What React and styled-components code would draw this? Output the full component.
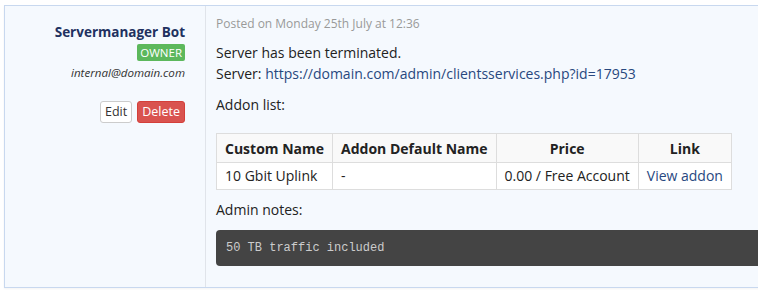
import React from 'react';
import styled, { createGlobalStyle } from 'styled-components';

const GlobalStyle = createGlobalStyle`
  html, body {
    margin: 0;
    padding: 0;
    background: #ffffff;
    overflow: hidden;
  }
  body {
    font-family: "Open Sans", "Noto Sans", sans-serif;
    font-size: 14px;
    color: #222;
  }
`;

const Page = styled.div`
  padding: 5px 0 0 4px;
  width: 758px;
  height: 292px;
  box-sizing: border-box;
  overflow: hidden;
`;

const Reply = styled.div`
  display: flex;
  width: 800px;
  height: 283px;
  box-sizing: border-box;
  background: #f5f9fe;
  border: 1px solid #c8d8ef;
  box-shadow: 0 1px 2px rgba(0, 0, 0, 0.05);
`;

const Sidebar = styled.div`
  width: 201px;
  flex-shrink: 0;
  box-sizing: border-box;
  border-right: 1px solid #e0e4ea;
  padding: 16px 20px 0 0;
  display: flex;
  flex-direction: column;
  align-items: flex-end;
  text-align: right;
`;

const Name = styled.div`
  font-weight: 700;
  font-size: 13.5px;
  line-height: 20px;
  color: #213160;
`;

const Badge = styled.span`
  margin-top: 2px;
  background: #5cb85c;
  color: #fff;
  font-size: 11.5px;
  line-height: 17px;
  padding: 0 3px;
  border-radius: 2px;
`;

const Email = styled.div`
  margin-top: 3px;
  font-size: 11.6px;
  line-height: 18px;
  font-style: italic;
  color: #333;
`;

const Actions = styled.div`
  display: flex;
  gap: 5px;
  margin-top: 19px;
`;

const Button = styled.button`
  font-family: "Open Sans", "Noto Sans", sans-serif;
  font-size: 12.5px;
  line-height: 20px;
  padding: 0 4px;
  border-radius: 3px;
  cursor: pointer;
  border: 1px solid ${p => (p.danger ? '#d43f3a' : '#ccc')};
  background: ${p => (p.danger ? '#d9534f' : '#fff')};
  color: ${p => (p.danger ? '#fff' : '#333')};
`;

const Message = styled.div`
  flex: 1;
  padding: 10px 0 0 10px;
`;

const Posted = styled.div`
  font-size: 12px;
  line-height: 16px;
  color: #999;
  margin-bottom: 10px;
`;

const Para = styled.p`
  margin: 0 0 10px;
  line-height: 21px;
`;

const Link = styled.a`
  color: #28487f;
  text-decoration: none;
`;

const Table = styled.table`
  border-collapse: collapse;
  margin: 18px 0 9px;
  background: #fff;

  th, td {
    border: 1px solid #ddd;
    padding: 3px 8px 4px;
    line-height: 19px;
    font-size: 14px;
    text-align: left;
    white-space: nowrap;
  }
  th {
    font-weight: 700;
    text-align: center;
    background: #f9f9f9;
    padding: 5px 8px 4px;
  }
`;

const Pre = styled.pre`
  margin: 8px 0 0;
  background: #444;
  color: #ccc;
  border-radius: 4px;
  padding: 9px 10px;
  font-family: "Liberation Mono", "DejaVu Sans Mono", monospace;
  font-size: 12px;
  line-height: 18px;
`;

export default function App() {
  return (
    <>
      <GlobalStyle />
      <Page>
        <Reply>
          <Sidebar>
            <Name>Servermanager Bot</Name>
            <Badge>OWNER</Badge>
            <Email>internal@domain.com</Email>
            <Actions>
              <Button>Edit</Button>
              <Button danger>Delete</Button>
            </Actions>
          </Sidebar>
          <Message>
            <Posted>Posted on Monday 25th July at 12:36</Posted>
            <Para>
              Server has been terminated.
              <br />
              Server: <Link href="#">https://domain.com/admin/clientsservices.php?id=17953</Link>
            </Para>
            <Para>Addon list:</Para>
            <Table>
              <thead>
                <tr>
                  <th>Custom Name</th>
                  <th>Addon Default Name</th>
                  <th>Price</th>
                  <th>Link</th>
                </tr>
              </thead>
              <tbody>
                <tr>
                  <td>10 Gbit Uplink</td>
                  <td>-</td>
                  <td>0.00 / Free Account</td>
                  <td><Link href="#">View addon</Link></td>
                </tr>
              </tbody>
            </Table>
            <Para>Admin notes:</Para>
            <Pre>50 TB traffic included</Pre>
          </Message>
        </Reply>
      </Page>
    </>
  );
}
